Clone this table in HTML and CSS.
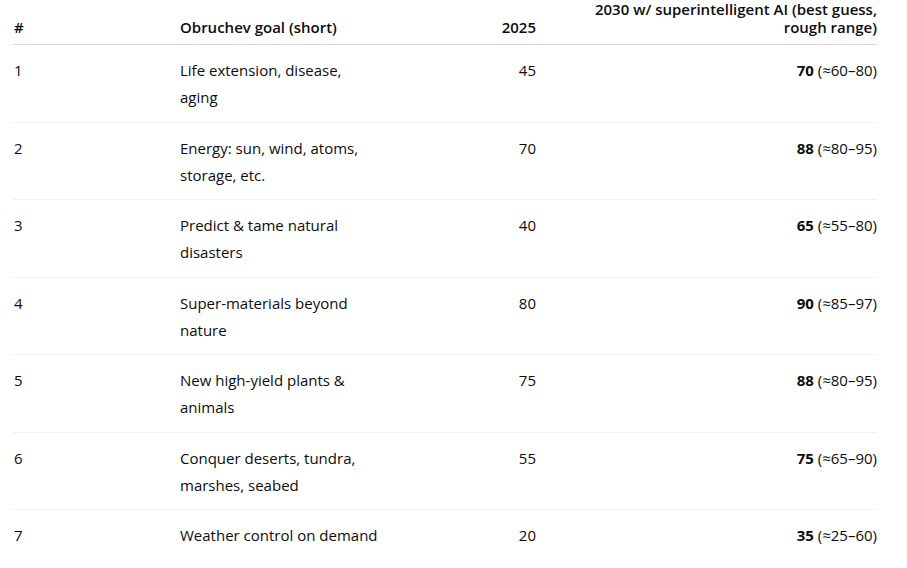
FILE: index.html
```html
<!DOCTYPE html>
<html lang="en">
<head>
<meta charset="utf-8">
<title>Obruchev goals</title>
<link rel="stylesheet" href="styles.css">
</head>
<body>
<table class="goals">
  <colgroup>
    <col class="c-num">
    <col class="c-goal">
    <col class="c-now">
    <col class="c-future">
  </colgroup>
  <thead>
    <tr>
      <th class="num">#</th>
      <th class="goal">Obruchev goal (short)</th>
      <th class="right">2025</th>
      <th class="right future">2030 w/ superintelligent AI (best guess, rough range)</th>
    </tr>
  </thead>
  <tbody>
    <tr><td class="num">1</td><td class="goal">Life extension, disease, aging</td><td class="right">45</td><td class="right future"><strong>70</strong> (≈60–80)</td></tr>
    <tr><td class="num">2</td><td class="goal">Energy: sun, wind, atoms, storage, etc.</td><td class="right">70</td><td class="right future"><strong>88</strong> (≈80–95)</td></tr>
    <tr><td class="num">3</td><td class="goal">Predict &amp; tame natural disasters</td><td class="right">40</td><td class="right future"><strong>65</strong> (≈55–80)</td></tr>
    <tr><td class="num">4</td><td class="goal">Super-materials beyond nature</td><td class="right">80</td><td class="right future"><strong>90</strong> (≈85–97)</td></tr>
    <tr><td class="num">5</td><td class="goal">New high-yield plants &amp; animals</td><td class="right">75</td><td class="right future"><strong>88</strong> (≈80–95)</td></tr>
    <tr><td class="num">6</td><td class="goal">Conquer deserts, tundra, marshes, seabed</td><td class="right">55</td><td class="right future"><strong>75</strong> (≈65–90)</td></tr>
    <tr><td class="num">7</td><td class="goal">Weather control on demand</td><td class="right">20</td><td class="right future"><strong>35</strong> (≈25–60)</td></tr>
  </tbody>
</table>
</body>
</html>
```

FILE: styles.css
```css
html, body {
  margin: 0;
  padding: 0;
  background: #ffffff;
}

body {
  font-family: "Open Sans", "Noto Sans", "Liberation Sans", sans-serif;
  font-size: 15px;
  color: #0d0d0d;
}

.goals {
  margin-left: 13px;
  width: 864px;
  border-collapse: collapse;
  table-layout: fixed;
}

.c-num { width: 167px; }
.c-goal { width: 225px; }
.c-now { width: 131px; }
.c-future { width: 341px; }

.goals th {
  font-weight: 600;
  line-height: 18px;
  vertical-align: bottom;
  text-align: left;
  padding: 0 0 8px 0;
  border-bottom: 1px solid #d9d9d9;
}

.goals td {
  line-height: 27px;
  vertical-align: top;
  text-align: left;
  padding: 12px 0 10.5px 0;
  border-bottom: 1px solid #f0f0f0;
}

.goals tbody tr:last-child td {
  border-bottom: none;
}

.goals .num {
  padding-left: 1px;
}

.goals .goal {
  padding-right: 25px;
}

.goals .right {
  text-align: right;
}

.goals .future {
  padding-left: 30px;
}

.goals strong {
  font-weight: 700;
}
```
